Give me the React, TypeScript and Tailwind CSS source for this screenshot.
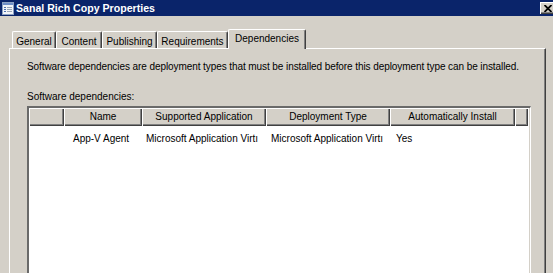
import React from "react";

const tabs = [
  { label: "General", cls: "w-[44px]" },
  { label: "Content", cls: "w-[46px]" },
  { label: "Publishing", cls: "w-[55px]" },
  { label: "Requirements", cls: "w-[71px]" },
];

function TitleIcon() {
  return (
    <svg width="12" height="13" viewBox="0 0 12 13" className="shrink-0">
      <rect x="0.5" y="0.5" width="11" height="12" fill="#f2f4f8" stroke="#8da2c4" />
      <rect x="1" y="1" width="10" height="2" fill="#6f8fc8" />
      <rect x="2" y="5" width="2" height="1" fill="#4a6fb0" />
      <rect x="5" y="5" width="5" height="1" fill="#9aa6b8" />
      <rect x="2" y="7" width="2" height="1" fill="#4a6fb0" />
      <rect x="5" y="7" width="5" height="1" fill="#9aa6b8" />
      <rect x="2" y="9" width="2" height="1" fill="#4a6fb0" />
      <rect x="5" y="9" width="5" height="1" fill="#9aa6b8" />
    </svg>
  );
}

export default function App() {
  return (
    <div className="w-[553px] h-[273px] overflow-hidden bg-[#d4d0c8] flex flex-col font-['Liberation_Sans',Arial,sans-serif] text-[10px] leading-[12px] text-black">
      {/* Title bar */}
      <div className="h-[16px] shrink-0 bg-[#0a246a] flex items-center overflow-hidden">
        <div className="ml-[2px]">
          <TitleIcon />
        </div>
        <span className="ml-[2px] text-white font-bold text-[10.6px] leading-[12px]">
          Sanal Rich Copy Properties
        </span>
        <div className="ml-auto mr-[-2px] w-[15px] h-[12px] shrink-0 bg-[#d4d0c8] flex items-center justify-center shadow-[inset_1px_1px_0_#ffffff,inset_-1px_-1px_0_#404040,inset_-2px_-2px_0_#808080]">
          <svg width="8" height="7" viewBox="0 0 8 7">
            <path d="M0.5 0 L7.5 7 M7.5 0 L0.5 7" stroke="#000" strokeWidth="1.8" />
          </svg>
        </div>
      </div>

      {/* Tabs row */}
      <div className="h-[32px] shrink-0 flex items-end pl-[12px]">
        {tabs.map((t) => (
          <div
            key={t.label}
            className={`${t.cls} h-[17px] pt-[4px] text-center whitespace-nowrap border-l border-t border-white border-r border-r-[#404040] rounded-tl-[2px] rounded-tr-[2px] shadow-[inset_-1px_0_0_#808080]`}
          >
            {t.label}
          </div>
        ))}
        <div className="relative z-10 w-[78px] h-[20px] mb-[-1px] pt-[3px] text-center whitespace-nowrap bg-[#d4d0c8] border-l border-t border-white border-r border-r-[#404040] rounded-tl-[2px] rounded-tr-[2px] shadow-[inset_-1px_0_0_#808080]">
          Dependencies
        </div>
      </div>

      {/* Panel */}
      <div className="ml-[9px] w-[537px] h-[260px] shrink-0 border-l border-t border-white border-r border-r-[#404040] shadow-[inset_-1px_0_0_#808080] pl-[17px] pt-[12px] flex flex-col">
        <div className="whitespace-nowrap tracking-[-0.08px]">
          Software dependencies are deployment types that must be installed before this deployment type can be installed.
        </div>
        <div className="mt-[18px] whitespace-nowrap">Software dependencies:</div>

        {/* List view */}
        <div className="mt-[3px] w-[504px] h-[200px] bg-white border-l-2 border-t-2 border-l-[#6a6a6a] border-t-[#6a6a6a] border-r border-b border-r-white border-b-white shadow-[inset_-1px_-1px_0_#d4d0c8] flex flex-col">
          <div className="flex h-[18px] shrink-0 mr-[1px]">
            <div className="w-[35px] h-full bg-[#d4d0c8] shadow-[inset_1px_1px_0_#ffffff,inset_-1px_-1px_0_#404040,inset_-2px_-2px_0_#808080]" />
            <div className="w-[78px] h-full bg-[#d4d0c8] pt-[3px] text-center whitespace-nowrap shadow-[inset_1px_1px_0_#ffffff,inset_-1px_-1px_0_#404040,inset_-2px_-2px_0_#808080]">
              Name
            </div>
            <div className="w-[124px] h-full bg-[#d4d0c8] pt-[3px] text-center whitespace-nowrap shadow-[inset_1px_1px_0_#ffffff,inset_-1px_-1px_0_#404040,inset_-2px_-2px_0_#808080]">
              Supported Application
            </div>
            <div className="w-[124px] h-full bg-[#d4d0c8] pt-[3px] text-center whitespace-nowrap shadow-[inset_1px_1px_0_#ffffff,inset_-1px_-1px_0_#404040,inset_-2px_-2px_0_#808080]">
              Deployment Type
            </div>
            <div className="w-[125px] h-full bg-[#d4d0c8] pt-[3px] text-center whitespace-nowrap shadow-[inset_1px_1px_0_#ffffff,inset_-1px_-1px_0_#404040,inset_-2px_-2px_0_#808080]">
              Automatically Install
            </div>
            <div className="w-[13px] h-full bg-[#d4d0c8] shadow-[inset_1px_1px_0_#ffffff,inset_-1px_-1px_0_#404040,inset_-2px_-2px_0_#808080]" />
          </div>
          <div className="flex pt-[7px] whitespace-nowrap">
            <div className="w-[35px]" />
            <div className="w-[78px] pl-[9px]">App-V Agent</div>
            <div className="w-[124px] pl-[4px]">Microsoft Application Virtı</div>
            <div className="w-[124px] pl-[5px]">Microsoft Application Virtı</div>
            <div className="w-[125px] pl-[6px]">Yes</div>
          </div>
        </div>
      </div>
    </div>
  );
}
